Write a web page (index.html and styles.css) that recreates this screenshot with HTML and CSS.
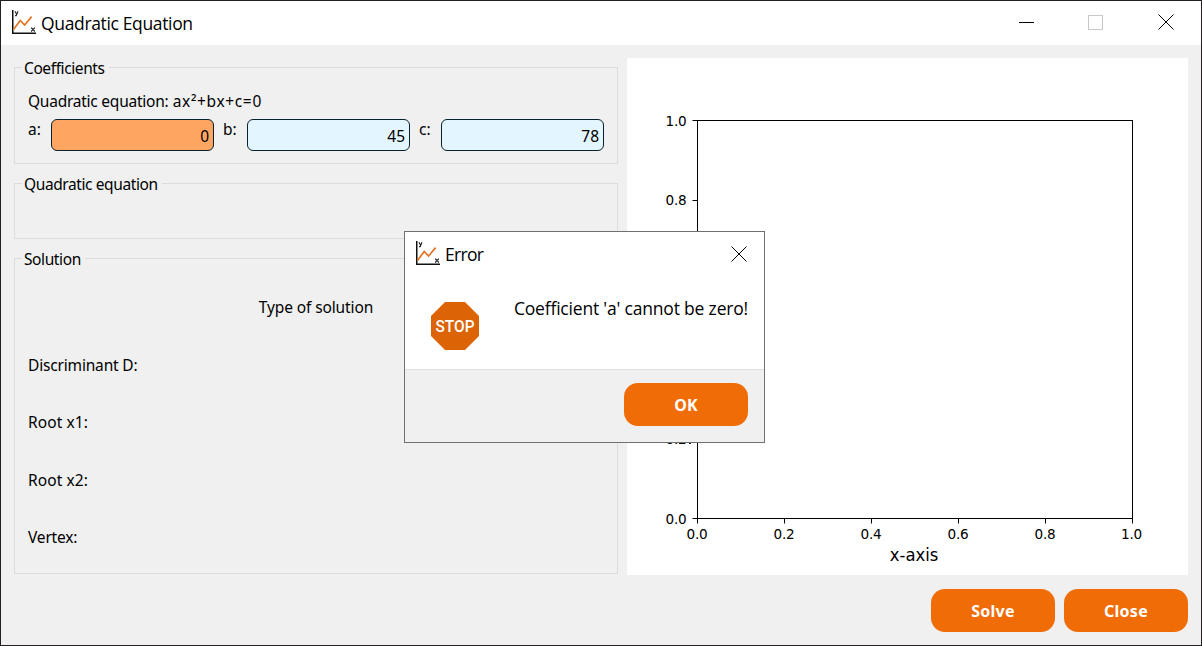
FILE: index.html
```html
<!DOCTYPE html>
<html lang="en">
<head>
<meta charset="utf-8">
<title>Quadratic Equation</title>
<link rel="stylesheet" href="styles.css">
</head>
<body>
<svg class="defs" width="0" height="0">
  <symbol id="logo" viewBox="0 0 24 24">
    <path d="M.75 0V23.25H24" fill="none" stroke="#111" stroke-width="1.5"/>
    <path d="M1.5 19.5 8.2 10.5 12.6 15 19.6 6.6" fill="none" stroke="#e37424" stroke-width="1.7"/>
    <path d="M3 1.2 4.6 4.2M6 1.2 4.2 5.6H3" fill="none" stroke="#222" stroke-width="1.1"/>
    <path d="M19.5 18 22.5 21M22.5 18 19.5 21M19 18H20.3M22 18H23M19 21.2H20.3M22 21.2H23" fill="none" stroke="#222" stroke-width="1.1"/>
  </symbol>
  <symbol id="cross" viewBox="0 0 16 16">
    <path d="M.5 .5 15.5 15.5M15.5 .5 .5 15.5" stroke="#000" stroke-width="1"/>
  </symbol>
</svg>
<div class="window">
  <header class="titlebar">
    <svg class="logo"><use href="#logo"/></svg>
    <span class="title">Quadratic Equation</span>
    <div class="controls">
      <svg width="15" height="15"><path d="M0 7.5H15" stroke="#000"/></svg>
      <svg width="15" height="15"><rect x=".5" y=".5" width="14" height="14" fill="none" stroke="#c8c8c8"/></svg>
      <svg width="16" height="16"><use href="#cross"/></svg>
    </div>
  </header>
  <main class="content">
    <div class="panels">
      <section class="group coefficients">
        <h2 class="legend">Coefficients</h2>
        <p class="hint">Quadratic equation: <span class="formula">ax²+bx+c=0</span></p>
        <div class="inputs">
          <label>a:</label><div class="field invalid">0</div>
          <label>b:</label><div class="field">45</div>
          <label>c:</label><div class="field">78</div>
        </div>
      </section>
      <section class="group equation">
        <h2 class="legend">Quadratic equation</h2>
      </section>
      <section class="group solution">
        <h2 class="legend">Solution</h2>
        <p class="type">Type of solution</p>
        <p class="row">Discriminant D:</p>
        <p class="row root">Root x1:</p>
        <p class="row root">Root x2:</p>
        <p class="row">Vertex:</p>
      </section>
    </div>
    <svg class="chart" width="561" height="517">
      <rect x="70.5" y="62.5" width="435" height="398" fill="none" stroke="#000"/>
      <path d="M65.5 62.5h5M65.5 142.5h5M65.5 221.5h5M65.5 301.5h5M65.5 381.5h5M65.5 460.5h5M70.5 460.5v5M157.5 460.5v5M244.5 460.5v5M331.5 460.5v5M418.5 460.5v5M505.5 460.5v5" stroke="#000"/>
      <path d="M62 173.5h2M62 385.5h2" stroke="#222"/>
      <g class="ticks" text-anchor="end">
        <text x="59.5" y="68">1.0</text><text x="59.5" y="147">0.8</text><text x="59.5" y="227">0.6</text>
        <text x="59.5" y="307">0.4</text><text x="59.5" y="386">0.2</text><text x="59.5" y="466">0.0</text>
      </g>
      <g class="ticks" text-anchor="middle">
        <text x="70" y="481">0.0</text><text x="157" y="481">0.2</text><text x="244" y="481">0.4</text>
        <text x="331" y="481">0.6</text><text x="418" y="481">0.8</text><text x="504.5" y="481">1.0</text>
      </g>
      <text class="axis" x="287" y="503" text-anchor="middle" textLength="48.5" lengthAdjust="spacingAndGlyphs">x-axis</text>
    </svg>
  </main>
  <footer class="actions">
    <button class="btn">Solve</button>
    <button class="btn">Close</button>
  </footer>
</div>
<div class="dialog">
  <header class="dialog-title">
    <svg class="logo"><use href="#logo"/></svg>
    <span class="title">Error</span>
    <svg class="dismiss" width="16" height="16"><use href="#cross"/></svg>
  </header>
  <div class="dialog-body">
    <svg class="stop" width="48" height="48">
      <path d="M14 0H34L48 14V34L34 48H14L0 34V14Z" fill="#dc6405"/>
      <text x="24" y="30" text-anchor="middle" textLength="39" lengthAdjust="spacingAndGlyphs">STOP</text>
    </svg>
    <p class="message">Coefficient 'a' cannot be zero!</p>
  </div>
  <footer class="dialog-actions"><button class="btn ok">OK</button></footer>
</div>
</body>
</html>
```
FILE: styles.css
```css
* { box-sizing: border-box; }
body { margin: 0; width: 1202px; height: 646px; overflow: hidden; font: 15.5px/20px "Noto Sans", sans-serif; letter-spacing: -0.4px; color: #000; }
p, h2 { margin: 0; font-size: inherit; font-weight: 400; }
.defs { position: absolute; }
.window { width: 1202px; height: 646px; border: 1px solid #231f22; background: #f0f0f0; display: flex; flex-direction: column; }
.titlebar { height: 44px; flex: none; background: #fff; display: flex; align-items: center; padding: 0 27px 0 11px; }
.logo { width: 24px; height: 24px; flex: none; }
.titlebar .logo { margin-bottom: 2px; }
.title { font: 17.5px/24px "Open Sans", sans-serif; letter-spacing: -0.35px; margin-left: 5px; }
.controls { margin-left: auto; margin-bottom: 2px; display: flex; gap: 54px; align-items: center; }
.controls svg { flex: none; }
.controls svg:last-child { margin-left: 1px; }
.content { display: flex; gap: 9px; padding: 13px 13px 0; height: 530px; }
.panels { width: 604px; display: flex; flex-direction: column; padding-top: 9px; gap: 19px; }
.group { border: 1px solid #dcdcdc; padding: 0 13px; }
.legend { width: max-content; margin: -10px 0 0 -6px; padding: 0 4px 0 2px; background: #f0f0f0; }
.coefficients { height: 97px; }
.hint { margin-top: 13px; letter-spacing: -0.24px; }
.formula { letter-spacing: 0.65px; margin-left: 0.5px; }
.inputs { display: grid; grid-template-columns: 23px 163px 33px 163px 31px 163px; margin-top: 8px; }
.inputs label { padding-left: 9px; letter-spacing: 0; }
.inputs label:first-child { padding-left: 0; }
.field { height: 32px; border: 1px solid #08222e; border-radius: 6px; background: #e3f6ff; text-align: right; padding: 6px 4px 0 0; letter-spacing: 0; }
.invalid { background: #ffa562; }
.equation { height: 56px; }
.solution { height: 316px; }
.type { text-align: center; margin: 28px 0 38px; letter-spacing: -0.12px; }
.row { margin-bottom: 37.4px; letter-spacing: -0.17px; }
.root { letter-spacing: 0.1px; }
.chart { background: #fff; flex: none; display: block; }
.ticks { font: 13.6px "DejaVu Sans", sans-serif; letter-spacing: -0.2px; }
.axis { font: 17px "DejaVu Sans", sans-serif; letter-spacing: 0; }
.actions { display: flex; justify-content: flex-end; gap: 9px; padding: 14px 13px 0; }
.btn { width: 124px; height: 43px; border: 0; border-radius: 14px; background: #f06c06; color: #fff; font: 700 16px/20px "Noto Sans", sans-serif; letter-spacing: 0.25px; padding: 0; }
.ok { letter-spacing: 0; }
.dialog { position: absolute; left: 404px; top: 231px; width: 361px; height: 212px; border: 1px solid #707070; background: #fff; display: flex; flex-direction: column; }
.dialog-title { height: 44px; display: flex; align-items: center; padding: 0 17px 0 11px; }
.dialog-title .logo { margin-bottom: 2px; }
.dialog-title .title { letter-spacing: -0.7px; }
.dismiss { margin-left: auto; margin-bottom: 1px; }
.dialog-body { flex: 1; display: flex; justify-content: space-between; padding: 26px 16px 0 26px; }
.stop text { font: 500 17px Roboto, sans-serif; fill: #fff; letter-spacing: 0; }
.message { font: 17.5px/24px "Open Sans", sans-serif; letter-spacing: -0.19px; margin-top: -6px; }
.dialog-actions { height: 73px; border-top: 1px solid #dfdfdf; background: #f0f0f0; display: flex; justify-content: flex-end; padding: 13px 16px 0; }
```
